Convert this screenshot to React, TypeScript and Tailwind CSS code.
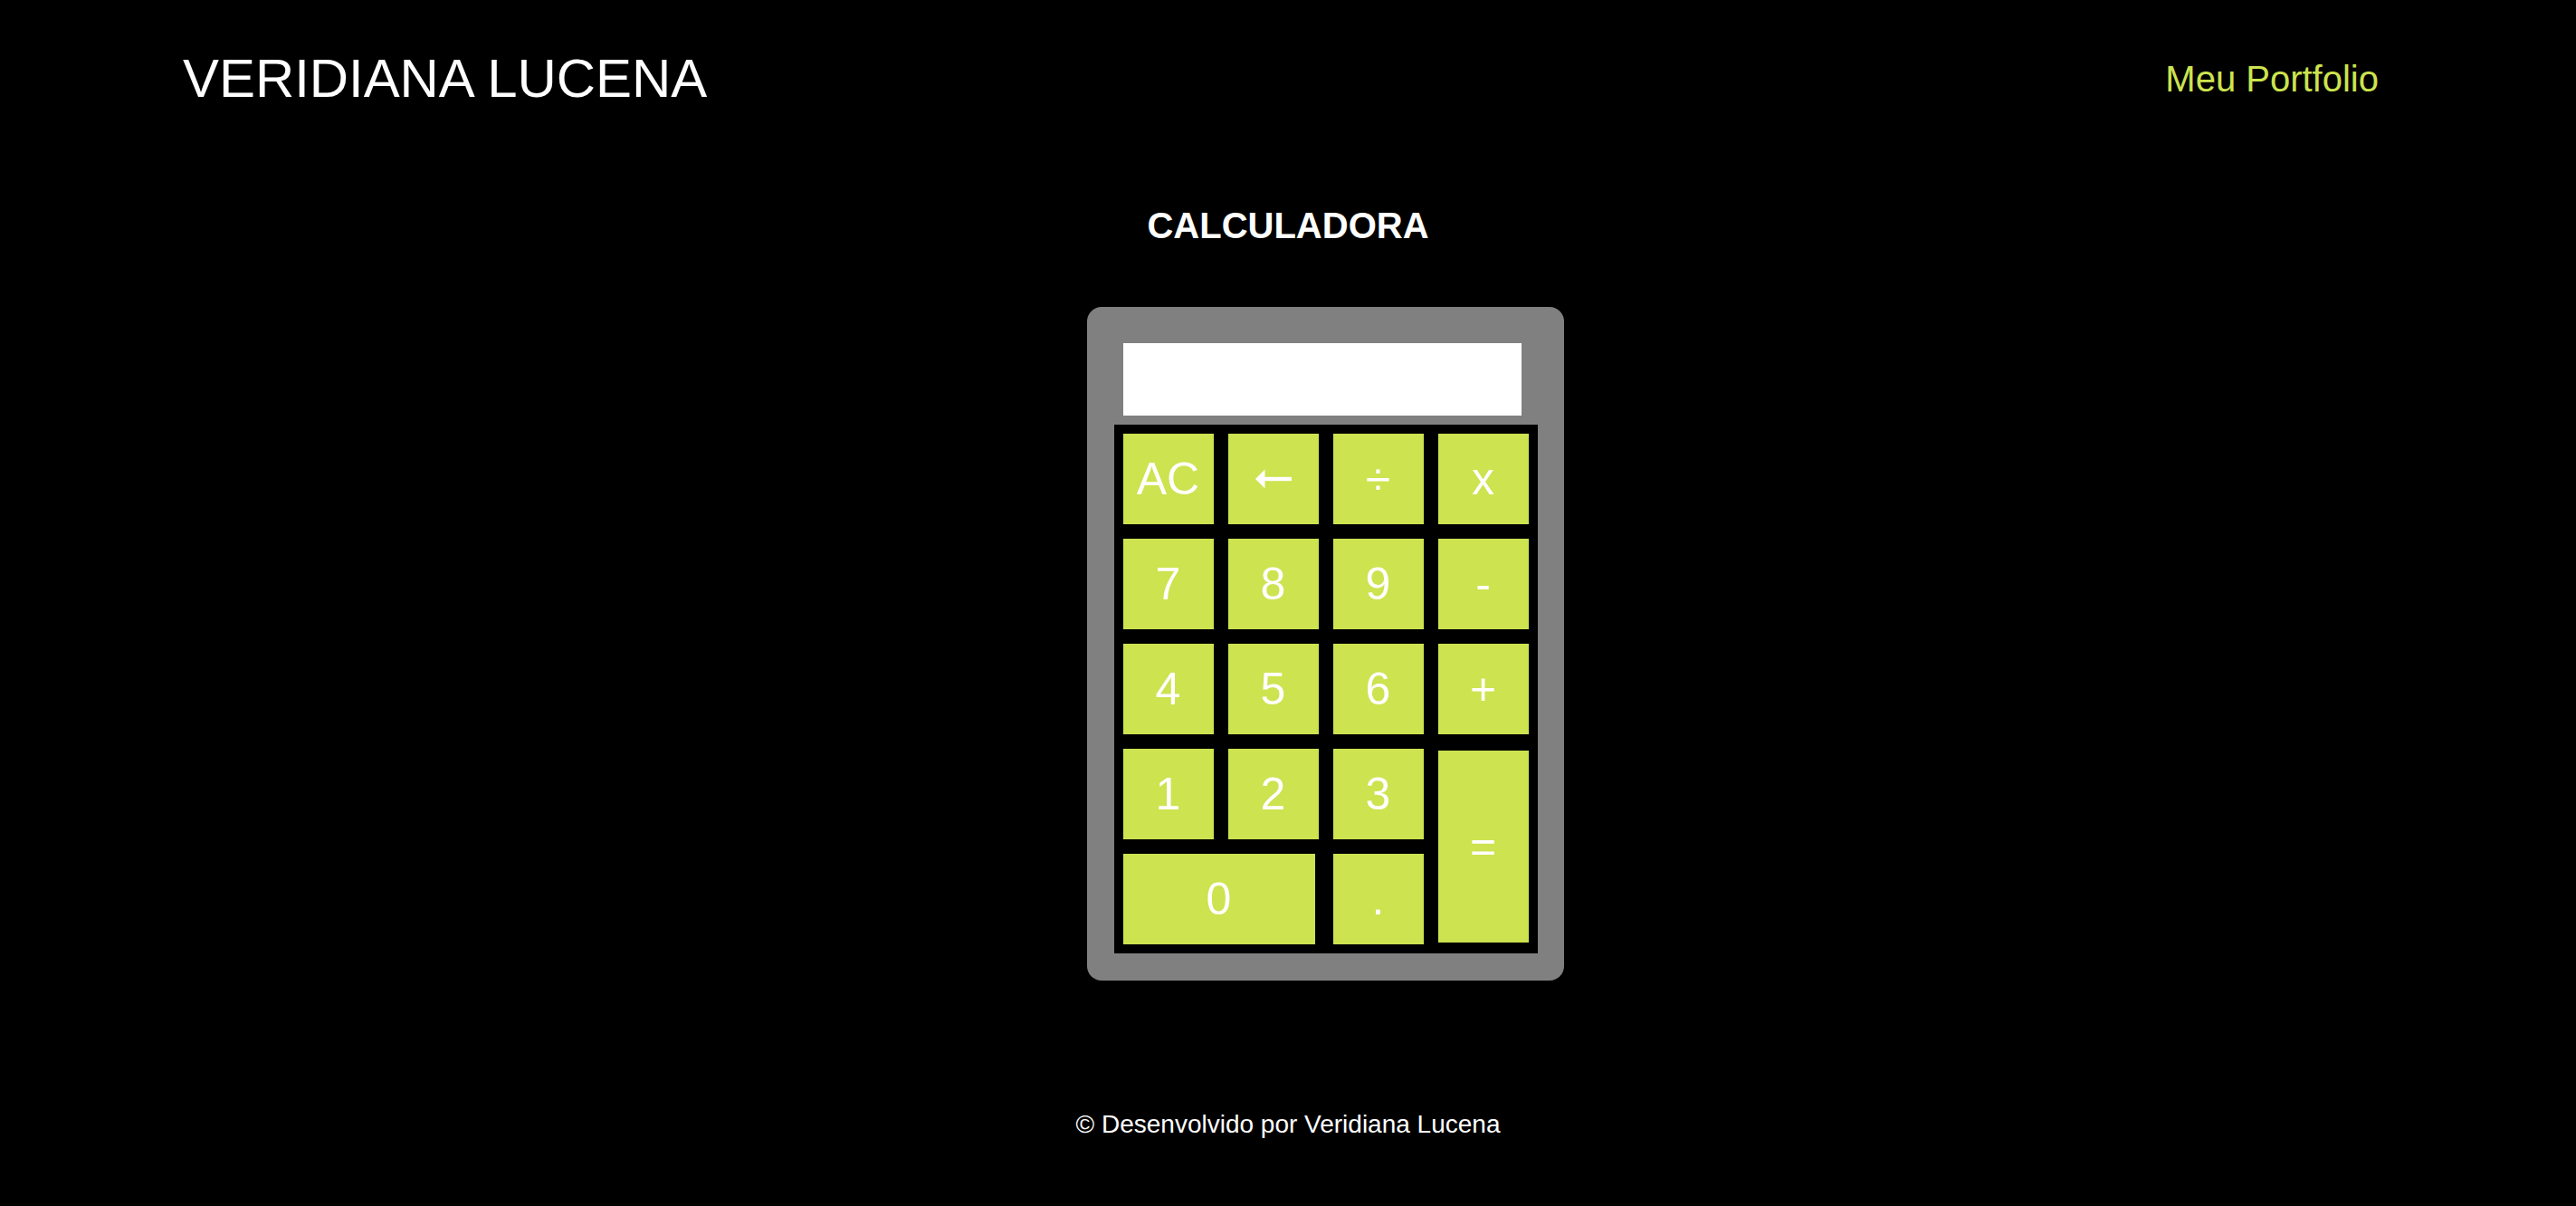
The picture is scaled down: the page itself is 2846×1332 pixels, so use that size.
import React from "react"

// Calculadora — página simples com cabeçalho, calculadora e rodapé

const arial = "font-['Liberation_Sans',Arial,sans-serif]"

function BackArrow() {
  return (
    <svg width="40" height="22" viewBox="0 0 40 22" fill="white">
      <polygon points="0,11 10.5,0.5 10.5,21.5" />
      <rect x="10" y="8.8" width="30" height="4.4" />
    </svg>
  )
}

type Key = { label: React.ReactNode; id: string; cls?: string }

const keys: Key[] = [
  { id: "ac", label: "AC" },
  { id: "back", label: <BackArrow /> },
  { id: "div", label: "÷" },
  { id: "mul", label: "x" },
  { id: "7", label: "7" },
  { id: "8", label: "8" },
  { id: "9", label: "9" },
  { id: "sub", label: "-" },
  { id: "4", label: "4" },
  { id: "5", label: "5" },
  { id: "6", label: "6" },
  { id: "add", label: "+" },
  { id: "1", label: "1" },
  { id: "2", label: "2" },
  { id: "3", label: "3" },
  { id: "eq", label: "=", cls: "row-span-2 self-start h-[212px] mt-[2px]" },
  { id: "0", label: "0", cls: "col-span-2 w-[212px] justify-self-start" },
  { id: "dot", label: "." },
]

function Calculator() {
  return (
    <div className="w-[527px] h-[744px] bg-[#808080] rounded-[16px] pt-[40px] flex flex-col">
      {/* visor */}
      <div className="ml-[40px] w-[440px] h-[80px] bg-white" />

      {/* teclado */}
      <div className="ml-[30px] mt-[10px] w-[468px] bg-black p-[10px] grid grid-cols-[repeat(4,100px)] auto-rows-[100px] gap-[16px]">
        {keys.map((k) => (
          <button
            key={k.id}
            className={`bg-[#cde34f] text-white text-[50px] leading-none flex items-center justify-center cursor-pointer ${arial} ${k.cls ?? ""}`}
          >
            {k.label}
          </button>
        ))}
      </div>
    </div>
  )
}

export default function App() {
  return (
    <div className={`min-h-[1332px] bg-black text-white flex flex-col ${arial}`}>
      {/* cabeçalho */}
      <header className="h-[173px] flex items-center justify-between pl-[202px] pr-[218px]">
        <h1 className="text-[59.9px] font-normal">VERIDIANA LUCENA</h1>
        <a className="text-[40px] text-[#cde34f]">Meu Portfolio</a>
      </header>

      <main className="flex flex-col items-center">
        <h2 className="mt-[53px] text-[40px] font-bold leading-[46px]">CALCULADORA</h2>
        <div className="mt-[67px] ml-[82px]">
          <Calculator />
        </div>
      </main>

      <footer className="mt-[138px] flex justify-center">
        <p className="text-[28px]">© Desenvolvido por Veridiana Lucena</p>
      </footer>
    </div>
  )
}
